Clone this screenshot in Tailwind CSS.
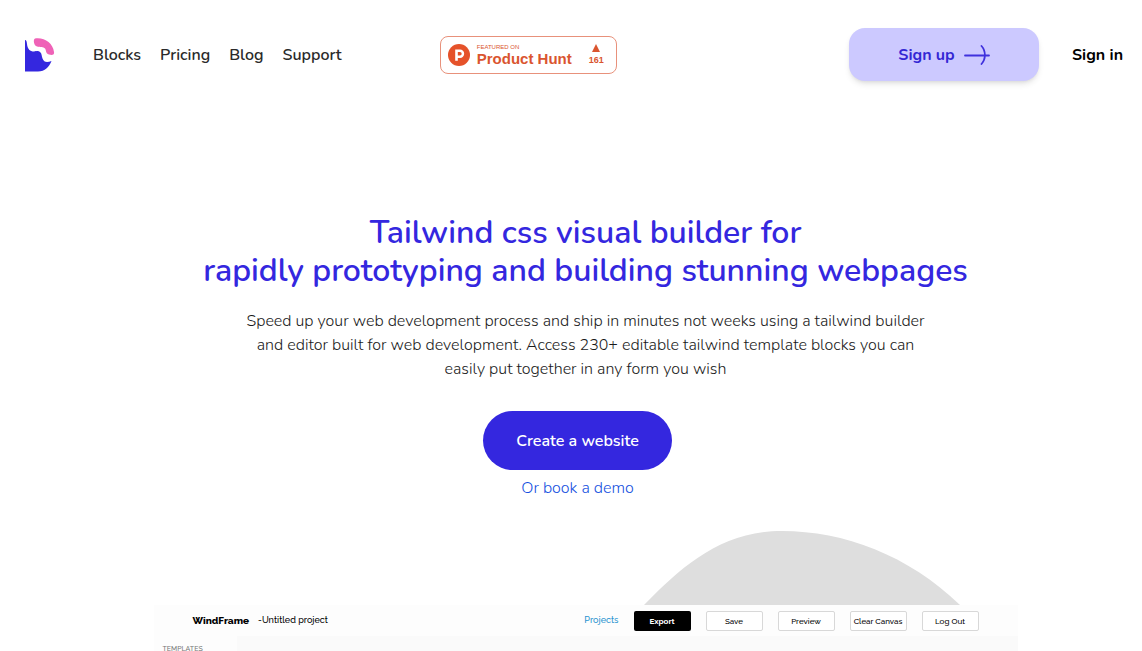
<!DOCTYPE html>
<html lang="en">
<head>
<meta charset="utf-8">
<meta name="viewport" content="width=device-width, initial-scale=1">
<title>WindFrame</title>
<script src="https://cdn.jsdelivr.net/npm/@tailwindcss/browser@4"></script>
</head>
<body class="bg-white font-[Nunito,'Open_Sans',sans-serif] text-[#2a2a2a] overflow-x-hidden">
<header class="flex items-center pt-7 pl-6 pr-[19px] text-base font-semibold">
  <a href="#" aria-label="Home" class="mr-[38px]">
    <svg class="w-[31px] h-[34px]" viewBox="0 0 31 34">
      <path fill="#3427df" d="M1 2C2.500 2 2.500 3 3 6C3.500 11 6 13.500 10 13.500C13 13 14 12.500 16 14C18 15.500 17.500 18 18.500 20.500C20 24.500 23 24.500 27.500 23C25 29 21 33.500 14 33.500H1Z"/>
      <path fill="#ef62b7" d="M11 .5C20-1 29 5 30 14C30.500 17 28 17.500 25 16.500C21.500 15.500 22.500 12.500 21 10.500C19.500 8.500 16 9.500 13 8.500C9.500 7.500 9 1.500 11 .5Z"/>
    </svg>
  </a>
  <nav class="flex gap-[19px]">
    <a href="#">Blocks</a>
    <a href="#">Pricing</a>
    <a href="#">Blog</a>
    <a href="#">Support</a>
  </nav>
  <a href="#" class="ml-[98px] flex h-[38px] w-[177px] shrink-0 items-center rounded-lg border border-[#e8917b] bg-white pl-[7px] pr-3 font-['Liberation_Sans',sans-serif] text-[#da552f]">
    <svg class="mr-[7px] size-[22px]" viewBox="0 0 22 22"><circle cx="11" cy="11" r="11" fill="#e5522a"/><path fill="#fff" fill-rule="evenodd" d="M7.200 5.500H12a4.200 4.200 0 0 1 0 8.400H9.800v2.800H7.200ZM9.800 8v3.400H12a1.700 1.700 0 0 0 0-3.400Z"/></svg>
    <span class="flex flex-1 flex-col">
      <span class="text-[6px] leading-[7px] font-normal">FEATURED ON</span>
      <span class="whitespace-nowrap text-[15px] leading-[15px] font-bold">Product Hunt</span>
    </span>
    <span class="flex flex-col items-center gap-1">
      <svg class="h-2 w-2" viewBox="0 0 8 8"><path fill="#da552f" d="M4 0 8 8H0Z"/></svg>
      <span class="text-[9px] leading-[9px] font-bold">161</span>
    </span>
  </a>
  <div class="ml-auto flex items-center gap-[33px]">
    <button type="button" class="flex h-[53px] w-[190px] items-center justify-center gap-[9px] rounded-2xl bg-[#ccc9ff] font-bold text-[#3427d4] shadow-md">
      Sign up
      <svg class="h-5 w-[26px]" viewBox="0 0 26 20" fill="none" stroke="#3f31dd" stroke-width="1.800" stroke-linecap="round"><path d="M1 10.500H25M17.500 1C22 6 22 14 17.500 19"/></svg>
    </button>
    <a href="#" class="font-bold text-black">Sign in</a>
  </div>
</header>
<main class="flex flex-col items-center pt-[133px] pl-[29px]">
  <h1 class="text-center text-[32px] leading-[38px] font-semibold text-[#3427df]">Tailwind css visual builder for<br>rapidly prototyping and building stunning webpages</h1>
  <p class="mt-[19px] text-center text-base leading-6 font-light text-[#1a1a1a]">Speed up your web development process and ship in minutes not weeks using a tailwind builder<br>and editor built for web development. Access 230+ editable tailwind template blocks you can<br>easily put together in any form you wish</p>
  <div class="mt-[30px] mr-4 flex flex-col items-center gap-1.5">
    <button type="button" class="h-[59px] w-[189px] rounded-full bg-[#3427df] text-base font-semibold text-white">Create a website</button>
    <a href="#" class="text-base leading-6 font-light text-[#1450e0]">Or book a demo</a>
  </div>
  <section class="mt-[31px] flex w-full max-w-[864px] flex-col font-[Raleway,Lato,sans-serif] text-[8px] text-black">
    <svg class="mr-[58px] h-[74px] w-[316px] self-end" viewBox="0 0 316 74"><path fill="#dedede" d="M0 74C38 35 78 0 138 0C200 0 264 24 316 74Z"/></svg>
    <div class="flex h-[31px] items-center bg-[#fdfdfd] pl-[39px] pr-[39px]">
      <span class="mr-[9px] text-[10px] font-extrabold">WindFrame</span>
      <span class="text-[9px] font-medium">-Untitled project</span>
      <a href="#" class="mr-[15px] ml-auto text-[9px] font-medium text-[#2a94d0]">Projects</a>
      <div class="flex gap-[15px] font-medium">
        <button type="button" class="h-5 w-[57px] rounded-xs bg-black font-bold text-white">Export</button>
        <button type="button" class="h-5 w-[57px] rounded-xs border border-[#d8d8d8] bg-white">Save</button>
        <button type="button" class="h-5 w-[57px] rounded-xs border border-[#d8d8d8] bg-white">Preview</button>
        <button type="button" class="h-5 w-[57px] whitespace-nowrap rounded-xs border border-[#d8d8d8] bg-white">Clear Canvas</button>
        <button type="button" class="h-5 w-[57px] rounded-xs border border-[#d8d8d8] bg-white">Log Out</button>
      </div>
    </div>
    <div class="flex bg-[#fafafa]">
      <div class="w-[83px] bg-[#fdfdfd] pt-2 pl-[9px] text-[7px] leading-[10px] font-medium text-[#777]">TEMPLATES</div>
    </div>
  </section>
</main>
</body>
</html>
